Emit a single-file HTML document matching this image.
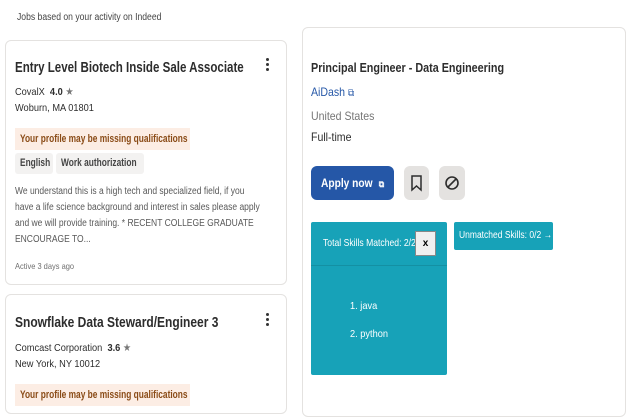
<!DOCTYPE html>
<html><head><meta charset="utf-8"><style>
*{margin:0;padding:0;box-sizing:border-box}
body{width:640px;height:400px;overflow:hidden;background:#fff;font-family:"Liberation Sans",sans-serif;color:#2d2d2d;position:relative}
.a{position:absolute;white-space:nowrap}
.t{transform-origin:0 0;transform:scaleX(0.88)}
.b{transform-origin:0 0;transform:scaleX(0.78)}
.card{position:absolute;border:1px solid #e4e2e0;border-radius:6px;background:#fff}
.tag{position:absolute;background:#f3f2f1;border-radius:3px;height:21px}
.tag span,.warn span{position:absolute;left:5px;top:4px;font-size:11px;font-weight:bold;color:#444;white-space:nowrap;transform-origin:0 0;transform:scaleX(0.76)}
.warn{position:absolute;background:#fcede4;height:22px}
.warn span{color:#8a4b16;top:5px}
.dots{position:absolute;width:3px}
.dots i{display:block;width:3px;height:3px;border-radius:50%;background:#333;margin-bottom:2px}
</style></head><body>
<div class="a t" style="left:17px;top:12px;font-size:10px;color:#444;transform:scaleX(0.86)">Jobs based on your activity on Indeed</div>

<div class="card" style="left:5px;top:40px;width:282px;height:245px"></div>
<div class="a b" style="left:15px;top:59px;font-size:15px;font-weight:bold;transform:scaleX(0.77)">Entry Level Biotech Inside Sale Associate</div>
<div class="dots" style="left:266px;top:58px"><i></i><i></i><i></i></div>
<div class="a t" style="left:15px;top:86px;font-size:10.5px">CovalX &nbsp;<b>4.0</b> <span style="color:#777">★</span></div>
<div class="a t" style="left:15px;top:102px;font-size:10.5px">Woburn, MA 01801</div>
<div class="warn" style="left:15px;top:128px;width:175px"><span>Your profile may be missing qualifications</span></div>
<div class="tag" style="left:15px;top:153px;width:38px"><span>English</span></div>
<div class="tag" style="left:56px;top:153px;width:88px"><span>Work authorization</span></div>
<div class="a t" style="left:15px;top:184px;font-size:10px;color:#595959;line-height:16px;transform:scaleX(0.85)">We understand this is a high tech and specialized field, if you<br>have a life science background and interest in sales please apply<br>and we will provide training. * RECENT COLLEGE GRADUATE<br>ENCOURAGE TO...</div>
<div class="a t" style="left:15px;top:261px;font-size:8.5px;color:#6f6f6f">Active 3 days ago</div>

<div class="card" style="left:5px;top:294px;width:282px;height:120px"></div>
<div class="a b" style="left:15px;top:314px;font-size:15px;font-weight:bold;transform:scaleX(0.8)">Snowflake Data Steward/Engineer 3</div>
<div class="dots" style="left:266px;top:313px"><i></i><i></i><i></i></div>
<div class="a t" style="left:15px;top:342px;font-size:10.5px">Comcast Corporation &nbsp;<b>3.6</b> <span style="color:#777">★</span></div>
<div class="a t" style="left:15px;top:358px;font-size:10.5px">New York, NY 10012</div>
<div class="warn" style="left:15px;top:384px;width:175px"><span>Your profile may be missing qualifications</span></div>

<div class="card" style="left:302px;top:27px;width:324px;height:390px"></div>
<div class="a b" style="left:311px;top:60px;font-size:13px;font-weight:bold;transform:scaleX(0.83)">Principal Engineer - Data Engineering</div>
<div class="a t" style="left:311px;top:85px;font-size:12px;color:#2557a7">AiDash <span style="font-size:10px">⧉</span></div>
<div class="a t" style="left:311px;top:109px;font-size:12px;color:#767676">United States</div>
<div class="a t" style="left:311px;top:130px;font-size:12px">Full-time</div>
<div class="a" style="left:311px;top:166px;width:83px;height:34px;background:#2557a7;border-radius:6px"></div>
<div class="a t" style="left:321px;top:176px;color:#fff;font-size:12px;font-weight:bold;transform:scaleX(0.85)">Apply now <span style="font-size:9px;margin-left:4px">⧉</span></div>
<div class="a" style="left:404px;top:166px;width:25px;height:34px;background:#e4e2e0;border-radius:6px">
<svg width="25" height="34"><path d="M8 10h9v14l-4.5-4-4.5 4z" fill="none" stroke="#2d2d2d" stroke-width="1.5"/></svg></div>
<div class="a" style="left:439px;top:166px;width:26px;height:34px;background:#e4e2e0;border-radius:6px">
<svg width="26" height="34"><circle cx="13" cy="17" r="6" fill="none" stroke="#2d2d2d" stroke-width="1.6"/><path d="M9 21l8-8" stroke="#2d2d2d" stroke-width="1.6"/></svg></div>

<div class="a" style="left:311px;top:222px;width:136px;height:153px;background:#17a2b8;border-radius:2px"></div>
<div class="a" style="left:311px;top:265px;width:136px;height:1px;background:#1490a3"></div>
<div class="a t" style="left:323px;top:237px;font-size:10.5px;color:#fff;transform:scaleX(0.82)">Total Skills Matched: 2/2</div>
<div class="a" style="left:415px;top:231px;width:21px;height:25px;background:#f0f0f0;border:1px solid #888;font-size:10px;font-weight:bold;text-align:center;line-height:23px;color:#000">x</div>
<div class="a t" style="left:350px;top:300px;font-size:10.5px;color:#fff">1. java</div>
<div class="a t" style="left:350px;top:328px;font-size:10.5px;color:#fff">2. python</div>
<div class="a" style="left:454px;top:222px;width:99px;height:28px;background:#17a2b8;border-radius:2px"></div>
<div class="a t" style="left:459px;top:230px;font-size:10px;color:#fff;transform:scaleX(0.85)">Unmatched Skills: 0/2 →</div>
</body></html>
